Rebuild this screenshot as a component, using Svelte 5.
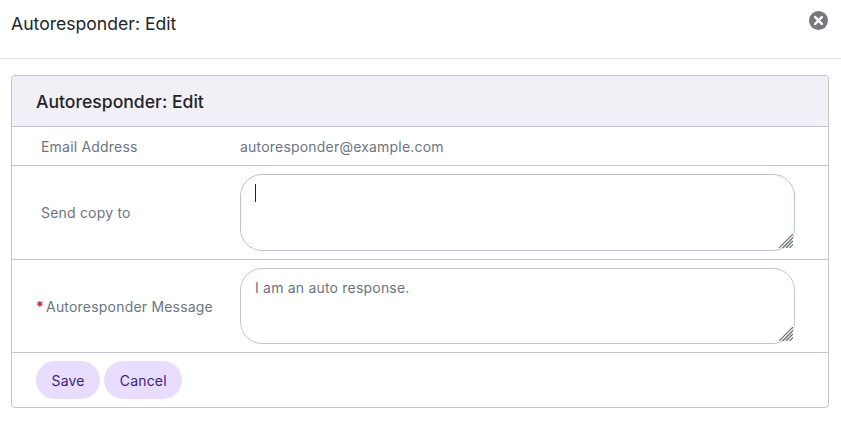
<script>
  let message = "I am an auto response.";
</script>

{#snippet grip()}
  <svg class="field__grip" viewBox="0 0 14 14" width="14" height="14" aria-hidden="true">
    <path d="M0 14L14 0M3.5 14L14 3.5M7 14L14 7M10.5 14L14 10.5" stroke="#6b6b70" stroke-width="1.2" fill="none" />
  </svg>
{/snippet}

<div class="modal">
  <header class="modal__head">
    <h2>Autoresponder: Edit</h2>
    <button type="button" class="modal__close" aria-label="Close">
      <svg viewBox="0 0 19 19" width="19" height="19" aria-hidden="true">
        <circle cx="9.5" cy="9.5" r="9.5" fill="#77777d" />
        <path d="M6.2 6.2l6.6 6.6M12.8 6.2l-6.6 6.6" stroke="#fff" stroke-width="2.6" stroke-linecap="round" />
      </svg>
    </button>
  </header>

  <section class="card">
    <h3 class="card__title">Autoresponder: Edit</h3>

    <div class="row row--static">
      <span class="row__label">Email Address</span>
      <span class="row__value">autoresponder@example.com</span>
    </div>

    <div class="row row--copy">
      <label class="row__label" for="copy-to">Send copy to</label>
      <div class="field">
        <textarea id="copy-to" class="field__input field__input--focus"></textarea>
        <span class="field__caret"></span>
        {@render grip()}
      </div>
    </div>

    <div class="row row--message">
      <label class="row__label row__label--required" for="message">
        <span class="star">*</span>Autoresponder Message
      </label>
      <div class="field">
        <textarea id="message" class="field__input field__input--short" bind:value={message}></textarea>
        {@render grip()}
      </div>
    </div>

    <div class="card__actions">
      <button type="button" class="pill">Save</button>
      <button type="button" class="pill">Cancel</button>
    </div>
  </section>
</div>

<style>
  :global(body) {
    background: #fff;
    font-family: Inter, "Liberation Sans", sans-serif;
  }

  .modal {
    width: 841px;
    height: 426px;
    overflow: hidden;
  }

  .modal__head {
    display: flex;
    align-items: flex-start;
    justify-content: space-between;
    box-sizing: border-box;
    height: 59px;
    padding: 11px 13px 0 11px;
    border-bottom: 1px solid #dee2e6;
  }

  .modal__head h2 {
    margin: 1px 0 0;
    color: #212529;
    font-size: 17.6px;
    font-weight: 400;
    line-height: 24px;
  }

  .modal__close {
    display: block;
    margin: 0;
    padding: 0;
    border: 0;
    background: none;
    line-height: 0;
  }

  .card {
    box-sizing: border-box;
    height: 333px;
    margin: 16px 12px 0 11px;
    border: 1px solid #c4c4cc;
    border-radius: 4px;
    overflow: hidden;
  }

  .card__title {
    box-sizing: border-box;
    height: 51px;
    margin: 0;
    padding: 0 24px;
    border-bottom: 1px solid #c4c4cc;
    background: #f3eff7;
    color: #212529;
    font-size: 17.6px;
    font-weight: 500;
    line-height: 52px;
  }

  .row {
    display: grid;
    grid-template-columns: 228px 1fr;
    align-items: center;
    box-sizing: border-box;
    padding-right: 33px;
    border-bottom: 1px solid #c4c4cc;
    color: #6c757d;
    font-size: 14px;
    letter-spacing: 0.2px;
  }

  .row--static {
    height: 39px;
  }

  .row--copy {
    height: 94px;
  }

  .row--message {
    height: 93px;
  }

  .row__label {
    padding-left: 29px;
  }

  .row__label--required {
    padding-left: 24px;
  }

  .star {
    margin-right: 2px;
    color: #c81e1e;
    font-weight: 700;
  }

  .field {
    position: relative;
    line-height: 0;
  }

  .field__input {
    display: block;
    box-sizing: border-box;
    width: 555px;
    height: 77px;
    padding: 8px 14px;
    border: 1px solid #c4c4cc;
    border-radius: 22px;
    outline: none;
    background: #fff;
    color: #6c757d;
    font-family: inherit;
    font-size: 14px;
    letter-spacing: 0.2px;
    line-height: 21px;
    resize: none;
  }

  .field__input--short {
    height: 76px;
  }

  .field__input--focus {
    border-color: #b8c4d2;
  }

  .field__caret {
    position: absolute;
    top: 10px;
    left: 15px;
    width: 1px;
    height: 18px;
    background: #212529;
  }

  .field__grip {
    position: absolute;
    right: 2px;
    bottom: 3px;
    pointer-events: none;
  }

  .card__actions {
    display: flex;
    gap: 4px;
    padding: 8px 24px;
  }

  .pill {
    height: 38px;
    padding: 0 15.5px;
    border: 0;
    border-radius: 19px;
    background: #e9ddff;
    color: #3b1f7a;
    font-family: inherit;
    font-size: 14px;
    letter-spacing: 0.2px;
  }
</style>
